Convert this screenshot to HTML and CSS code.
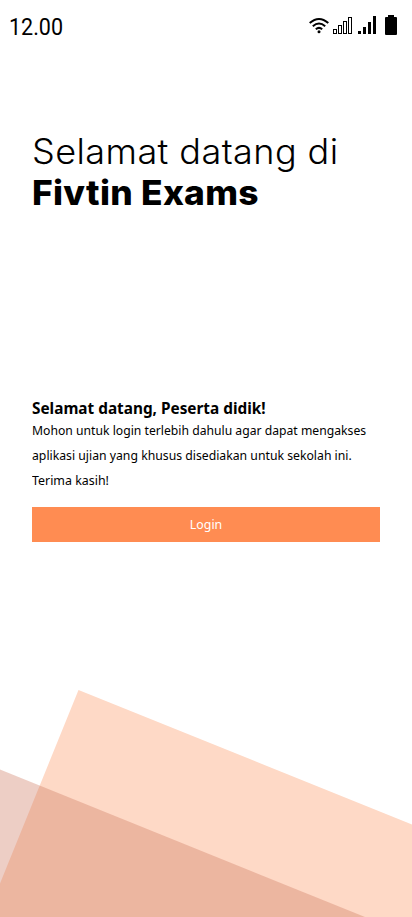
FILE: index.html
```html
<!DOCTYPE html>
<html lang="id">
<head>
<meta charset="utf-8">
<meta name="viewport" content="width=device-width, initial-scale=1">
<title>Fivtin Exams</title>
<link rel="stylesheet" href="styles.css">
</head>
<body>
<div class="screen">
  <header class="status">
    <time class="clock">12.00</time>
    <svg class="status-icons" width="90" height="22" viewBox="0 0 90 22" aria-hidden="true">
      <g fill="none" stroke="#000" stroke-width="2">
        <path d="M1.7 9.1Q11 .9 20.3 9.1M4.8 12.2Q11 6.8 17.2 12.2M7.8 15.2Q11 12.6 14.2 15.2"/>
      </g>
      <circle cx="11" cy="17.7" r="1.5"/>
      <g fill="none" stroke="#000">
        <rect x="25.5" y="15.5" width="3" height="4"/>
        <rect x="30.5" y="11.5" width="3" height="8"/>
        <rect x="35.5" y="7.5" width="3" height="12"/>
        <rect x="40.5" y="3.5" width="3" height="16"/>
      </g>
      <path d="M50 17h3v3h-3zM55 13h3v7h-3zM60 8h3v12h-3zM65 2h3v18h-3z"/>
      <path d="M80 1h6v2h2q1 0 1 1v16q0 1-1 1H78q-1 0-1-1V4q0-1 1-1h2z"/>
    </svg>
  </header>
  <h1 class="title"><span class="greeting">Selamat datang di</span><strong class="brand">Fivtin Exams</strong></h1>
  <main class="content">
    <h2 class="subtitle">Selamat datang, Peserta didik!</h2>
    <p class="message"><span class="line line-one">Mohon untuk login terlebih dahulu agar dapat mengakses</span> <span class="line line-two">aplikasi ujian yang khusus disediakan untuk sekolah ini.</span> <span class="line line-three">Terima kasih!</span></p>
    <button class="login" type="button"><span class="login-label">Login</span></button>
  </main>
  <svg class="backdrop" width="412" height="227" viewBox="0 0 412 227" aria-hidden="true">
    <path class="shape-peach" d="M78.5 0L412 134.5V227H0V193.5z"/>
    <path class="shape-rose" d="M0 79.5L365 227H0z"/>
  </svg>
</div>
</body>
</html>
```
FILE: styles.css
```css
* { box-sizing: border-box; }
body { margin: 0; background: #fff; color: #000; font-family: "Noto Sans", sans-serif; }
.screen { display: flex; flex-direction: column; width: 412px; height: 917px; overflow: hidden; }
.status { display: flex; justify-content: space-between; align-items: flex-start; height: 54px; padding: 14px 14px 0 9px; }
.clock { font: 400 23px/27px Roboto, sans-serif; transform: scaleX(.935); transform-origin: left; }
.status-icons { display: block; }
.title { display: flex; flex-direction: column; align-items: flex-start; height: 84px; margin: 76px 32px 0; font: 300 35px/42px Inter, sans-serif; white-space: nowrap; }
.greeting { letter-spacing: .4px; transform: scaleX(1.03); transform-origin: left; }
.brand { font-weight: 800; font-size: 34px; letter-spacing: .3px; transform: scaleX(1.04); transform-origin: left; }
.content { display: flex; flex-direction: column; align-items: stretch; margin: 184px 32px 0; }
.subtitle { align-self: flex-start; margin: 0; font-size: 16.5px; line-height: 20px; font-weight: 700; white-space: nowrap; transform: scaleX(.93); transform-origin: left; }
.message { display: flex; flex-direction: column; align-items: flex-start; margin: 0; font-size: 13px; line-height: 25px; white-space: nowrap; }
.line { transform-origin: left; }
.line-one { transform: scaleX(.937); }
.line-two { transform: scaleX(.941); }
.line-three { transform: scaleX(.955); }
.login { height: 35px; margin-top: 14px; padding: 0; border: 0; background: #ff8c52; color: #fff; font: 400 13px/35px "Noto Sans", sans-serif; }
.login-label { display: inline-block; transform: scaleX(.95); }
.backdrop { display: block; margin-top: auto; }
.shape-rose { fill: rgb(204, 119, 94); fill-opacity: .36; }
.shape-peach { fill: #fed9c6; }
```
